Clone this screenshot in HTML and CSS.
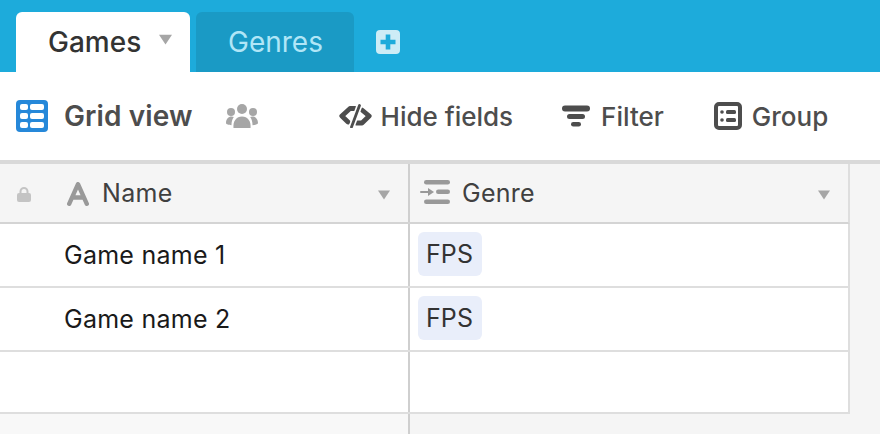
FILE: index.html
```html
<!DOCTYPE html>
<html lang="en">
<head>
<meta charset="utf-8">
<title>Games</title>
<link rel="stylesheet" href="styles.css">
</head>
<body>
<header class="tabbar">
  <div class="tab tab-active">
    <span class="tab-label">Games</span>
    <svg class="caret caret-tab" viewBox="0 0 12 10"><path d="M0 .5h12L6 9.500z"/></svg>
  </div>
  <div class="tab tab-inactive"><span class="tab-label">Genres</span></div>
  <svg class="add-icon" viewBox="0 0 24 24"><rect width="24" height="24" rx="4" fill="#cdecf6"/><path d="M12 4.500v15M4.500 12h15" stroke="#1dabdb" stroke-width="4.600" fill="none"/></svg>
</header>
<nav class="toolbar">
  <svg class="view-icon" viewBox="0 0 32 32"><rect width="32" height="32" rx="4" class="view-bg"/><g fill="#fff"><rect x="4" y="4" width="8" height="6" rx="2"/><rect x="14" y="4" width="14" height="6" rx="2"/><rect x="4" y="13" width="8" height="6" rx="2"/><rect x="14" y="13" width="14" height="6" rx="2"/><rect x="4" y="22" width="8" height="6" rx="2"/><rect x="14" y="22" width="14" height="6" rx="2"/></g></svg>
  <span class="view-name">Grid view</span>
  <svg class="people-icon" viewBox="0 0 32 24"><g fill="#a6a6a6"><circle cx="16" cy="5" r="5"/><circle cx="5" cy="8" r="4"/><circle cx="27" cy="8" r="4"/><path d="M7.500 24c-.8-7 3-11.500 8.500-11.500S25.300 17 24.500 24z"/><path d="M0 19c0-4 2.500-6.500 5.500-6.500 1 0 1.700.2 2.300.6C6.200 15.300 5.500 18 5.500 21.200 3 21 0 20.500 0 19zM32 19c0-4-2.500-6.500-5.500-6.500-1 0-1.700.2-2.300.6 1.600 2.200 2.300 4.900 2.300 8.100 2.500-.2 5.500-.7 5.500-2.200z"/></g></svg>
  <div class="tools">
    <div class="tool tool-hide">
      <svg class="tool-icon-wide" viewBox="0 0 33 24"><g fill="none" stroke="#4d4d4d" stroke-linecap="round" stroke-linejoin="round"><path d="M16 4.500H11L2.800 12l6.200 6" stroke-width="4.800"/><path d="M23 6l7.200 6-7.200 7h-6" stroke-width="4.800"/><path d="M20.500 1.500 12.500 23" stroke="#fff" stroke-width="6"/><path d="M20.500 1.500 12.500 23" stroke-width="2.800"/></g></svg>
      <span>Hide fields</span>
    </div>
    <div class="tool tool-filter">
      <svg class="tool-icon-wide" viewBox="0 0 28 22"><g fill="#4d4d4d"><rect y=".5" width="28" height="6" rx="3"/><rect x="5" y="9" width="18" height="5" rx="2.500"/><rect x="9" y="17" width="10" height="4.500" rx="2.250"/></g></svg>
      <span>Filter</span>
    </div>
    <div class="tool tool-group">
      <svg class="tool-icon-square" viewBox="0 0 28 28"><rect x="2" y="2" width="24" height="24" rx="3" fill="none" stroke="#4d4d4d" stroke-width="4"/><g fill="#4d4d4d"><circle cx="8" cy="10" r="1.800"/><circle cx="8" cy="18" r="1.800"/><rect x="12" y="8" width="10" height="4" rx="1.500"/><rect x="12" y="16" width="10" height="4" rx="1.500"/></g></svg>
      <span>Group</span>
    </div>
  </div>
</nav>
<main class="table">
  <div class="row row-head">
    <div class="cell cell-name head-name">
      <svg class="lock" viewBox="0 0 16 16"><path d="M4.500 7V5.500a3.500 3.500 0 0 1 7 0V7" fill="none" stroke="#c4c4c4" stroke-width="2"/><rect x="1" y="7" width="14" height="9" rx="2" fill="#c4c4c4"/></svg>
      <svg class="type-a" viewBox="0 0 22 24"><path d="M2.200 21.800 11 2.200l8.800 19.600M5.500 15.500h11" fill="none" stroke="#999" stroke-width="4.400" stroke-linecap="round" stroke-linejoin="round"/></svg>
      <span class="head-label">Name</span>
      <svg class="caret caret-head" viewBox="0 0 12 10"><path d="M0 .5h12L6 9.500z"/></svg>
    </div>
    <div class="cell cell-genre head-genre">
      <svg class="type-link" viewBox="0 0 30 24"><g fill="#999"><rect x="4" y="0" width="26" height="4.500" rx="2.250"/><rect x="16" y="9.500" width="14" height="4.500" rx="2.250"/><rect x="4" y="19.500" width="26" height="4.500" rx="2.250"/><rect y="11" width="9" height="2" rx="1"/><path d="M8 8l6 4-6 4z"/></g></svg>
      <span class="head-label head-label-genre">Genre</span>
      <svg class="caret caret-head" viewBox="0 0 12 10"><path d="M0 .5h12L6 9.500z"/></svg>
    </div>
  </div>
  <div class="row"><div class="cell cell-name body-name">Game name 1</div><div class="cell cell-genre"><span class="pill">FPS</span></div></div>
  <div class="row"><div class="cell cell-name body-name">Game name 2</div><div class="cell cell-genre"><span class="pill">FPS</span></div></div>
  <div class="row row-last"><div class="cell cell-name"></div><div class="cell cell-genre"></div></div>
  <div class="footer"><div class="footer-left"></div></div>
</main>
</body>
</html>
```
FILE: styles.css
```css
* { box-sizing: border-box; }
html, body { margin: 0; height: 100%; }
body {
  width: 880px;
  height: 434px;
  overflow: hidden;
  display: flex;
  flex-direction: column;
  background: #f5f5f5;
  font-family: Inter, "Liberation Sans", sans-serif;
  color: #333;
}
.tabbar {
  flex: none;
  height: 72px;
  background: #1dabdb;
  display: flex;
  align-items: flex-end;
  padding-left: 16px;
}
.tab {
  height: 60px;
  border-radius: 6px 6px 0 0;
  display: flex;
  align-items: center;
  font-size: 28px;
  font-weight: 500;
}
.tab-active {
  width: 174px;
  background: #fff;
  color: #333;
  padding-left: 32px;
}
.tab-inactive {
  width: 158px;
  margin-left: 6px;
  background: #1a9ac5;
  color: #b0e6f7;
  padding-left: 32px;
  font-weight: 400;
}
.caret { fill: #a6a6a6; display: block; flex: none; }
.caret-tab { width: 13px; height: 11px; margin-left: 18px; margin-bottom: 5px; }
.add-icon { width: 24px; height: 24px; margin: 0 0 18px 22px; flex: none; }
.toolbar {
  flex: none;
  height: 88px;
  background: #fff;
  display: flex;
  align-items: center;
  padding-left: 16px;
}
.view-icon { width: 32px; height: 32px; flex: none; }
.view-bg { fill: #2688d9; }
.view-name {
  margin-left: 16px;
  font-size: 28px;
  font-weight: 600;
  letter-spacing: .1px;
  color: #4d4d4d;
}
.people-icon { width: 32px; height: 24px; margin-left: 33px; flex: none; }
.tools {
  display: flex;
  align-items: center;
  margin-left: 81px;
  font-size: 26px;
  font-weight: 500;
  color: #4d4d4d;
}
.tool { display: flex; align-items: center; }
.tool-icon-wide { width: 33px; height: 24px; flex: none; margin-right: 9px; }
.tool-filter { margin-left: 49px; }
.tool-filter .tool-icon-wide { width: 28px; height: 22px; margin-right: 11px; }
.tool-group { margin-left: 50px; }
.tool-icon-square { width: 28px; height: 28px; flex: none; margin-right: 10px; }
.table { flex: 1; display: flex; flex-direction: column; border-top: 4px solid #d9d9d9; }
.row {
  flex: none;
  width: 850px;
  height: 64px;
  display: flex;
  background: #fff;
  border-bottom: 2px solid #dedede;
  border-right: 2px solid #dedede;
}
.row-head { height: 60px; background: #f5f5f5; border-bottom-color: #d4d4d4; }
.row-last { height: 62px; }
.cell { display: flex; align-items: center; }
.cell-name { width: 410px; border-right: 2px solid #cfcfcf; flex: none; padding-right: 18px; }
.cell-genre { flex: 1; padding-left: 8px; padding-right: 18px; padding-bottom: 2px; }
.body-name { padding-left: 64px; font-size: 25px; letter-spacing: .25px; color: #1a1a1a; }
.head-name { padding-left: 16px; }
.head-genre { padding-left: 10px; padding-bottom: 0; }
.lock { width: 16px; height: 16px; flex: none; margin-top: 2px; }
.type-a { width: 22px; height: 24px; flex: none; margin-left: 35px; margin-top: 2px; }
.type-link { width: 30px; height: 24px; flex: none; margin-bottom: 2px; }
.head-label { margin-left: 13px; font-size: 25px; letter-spacing: .3px; color: #404040; flex: 1; }
.head-label-genre { margin-left: 12px; letter-spacing: .25px; }
.caret-head { width: 12px; height: 10px; margin-top: 3px; }
.pill {
  display: block;
  height: 44px;
  line-height: 44px;
  padding: 0 9px 0 8px;
  border-radius: 6px;
  background: #e9eefa;
  font-size: 25px;
  letter-spacing: .1px;
  color: #333;
}
.footer { flex: 1; }
.footer-left { width: 410px; height: 100%; background: #f8f8f8; border-right: 2px solid #cfcfcf; }
```
